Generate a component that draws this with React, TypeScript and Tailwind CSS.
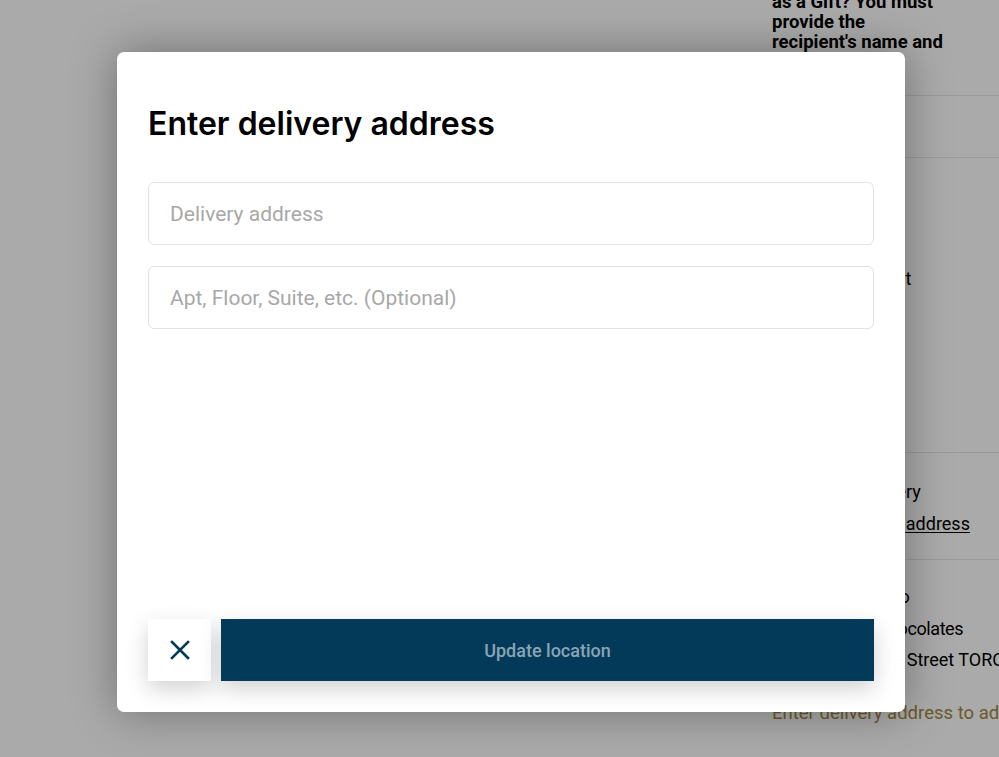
import React from "react";

function CloseIcon() {
  return (
    <svg width="20" height="20" viewBox="0 0 20 20" fill="none" aria-hidden="true">
      <path d="M2 2L18 18M18 2L2 18" stroke="#033a59" strokeWidth="2.6" strokeLinecap="square" />
    </svg>
  );
}

function CheckoutColumn() {
  return (
    <div className="ml-[772px] w-[227px] overflow-hidden font-['Roboto',sans-serif] text-black">
      <div className="-mt-[8px] pb-[43px] text-[18.5px] font-bold leading-[20px] whitespace-nowrap">
        <div>as a Gift? You must</div>
        <div>provide the</div>
        <div>recipient's name and</div>
      </div>
      <div className="h-[62px] border-t border-[#e6e6e6]"></div>
      <div className="h-[295px] border-t border-[#e6e6e6] pt-[107px] text-[18px]">
        <div className="whitespace-nowrap pl-[17px]">Add gift receipt</div>
      </div>
      <div className="h-[107px] border-t border-[#e6e6e6] pt-[23px] text-[18px] leading-[32px] whitespace-nowrap">
        <div className="pl-[9px]">Standard Delivery</div>
        <div className="pl-[33px] underline underline-offset-2">Edit delivery address</div>
      </div>
      <div className="border-t border-[#e6e6e6] pt-[21px] text-[18px] leading-[31.5px] whitespace-nowrap">
        <div>Gift from Toronto</div>
        <div className="tracking-[-0.4px]">Laura Secord Chocolates</div>
        <div>2 Old Wellington Street TORONTO</div>
        <div className="mt-[22px] text-[18.5px] text-[#a1873f]">Enter delivery address to add</div>
      </div>
    </div>
  );
}

function AddressModal() {
  return (
    <div className="flex h-[660px] w-[788px] flex-col rounded-[7px] bg-white px-[31px] pb-[31px] pt-[52px] shadow-[0_0_45px_rgba(0,0,0,0.35)]">
      <h1 className="font-['Inter',sans-serif] text-[32px] font-semibold leading-[40px] tracking-normal text-black">
        Enter delivery address
      </h1>
      <div className="mt-[38px] flex flex-col gap-[21px] font-['Roboto',sans-serif]">
        <input
          className="h-[63px] w-full rounded-[6px] border border-[#e2e2e2] px-[21px] text-[21px] text-black outline-none placeholder:text-[#a8a8a8]"
          placeholder="Delivery address"
        />
        <input
          className="h-[63px] w-full rounded-[6px] border border-[#e2e2e2] px-[21px] text-[21px] text-black outline-none placeholder:text-[#a8a8a8]"
          placeholder="Apt, Floor, Suite, etc. (Optional)"
        />
      </div>
      <div className="mt-auto flex gap-[10px]">
        <button className="flex h-[62px] w-[63px] items-center justify-center bg-white shadow-[0_8px_22px_rgba(0,0,0,0.18)]">
          <CloseIcon />
        </button>
        <button className="flex h-[62px] flex-1 items-center justify-center bg-[#033a59] font-['Roboto',sans-serif] text-[18px] font-medium text-[#8aa4b5] shadow-[0_8px_22px_rgba(0,0,0,0.18)]">
          Update location
        </button>
      </div>
    </div>
  );
}

export default function App() {
  return (
    <div className="relative h-[757px] w-[999px] overflow-hidden bg-white">
      <CheckoutColumn />
      <div className="absolute inset-0 bg-black/[0.333] pl-[117px] pt-[52px]">
        <AddressModal />
      </div>
    </div>
  );
}
